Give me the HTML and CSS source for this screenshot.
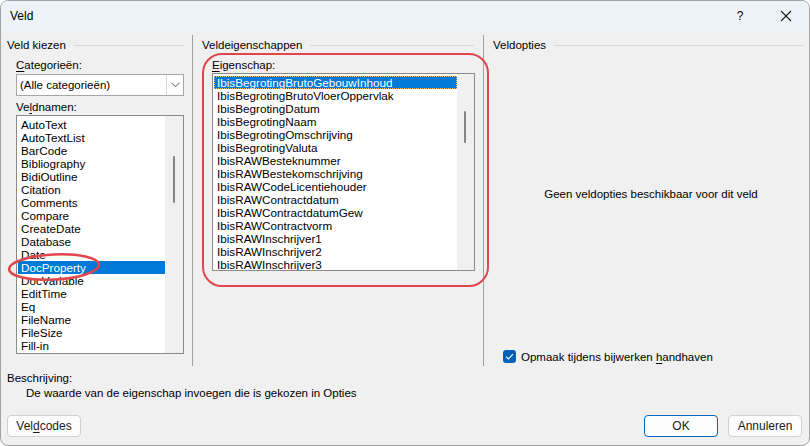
FILE: index.html
```html
<!DOCTYPE html>
<html lang="nl">
<head>
<meta charset="utf-8">
<title>Veld</title>
<link rel="stylesheet" href="styles.css">
</head>
<body>
<div class="window">
  <div class="titlebar">
    <span class="title">Veld</span>
    <span class="tb-help">?</span>
    <span class="tb-close">
      <svg width="12" height="12" viewBox="0 0 12 12"><path d="M1 1L11 11M11 1L1 11" stroke="#1a1a1a" stroke-width="1.1" fill="none"/></svg>
    </span>
  </div>

  <div class="columns">
    <div class="col col-left">
      <div class="group-head"><span>Veld kiezen</span></div>
      <div class="label"><u>C</u>ategorieën:</div>
      <div class="combo">
        <span class="combo-text">(Alle categorieën)</span>
        <span class="combo-btn">
          <svg width="9" height="6" viewBox="0 0 9 6"><path d="M0.5 0.8L4.5 4.8L8.5 0.8" stroke="#555" stroke-width="1" fill="none"/></svg>
        </span>
      </div>
      <div class="label">Ve<u>l</u>dnamen:</div>
      <div class="listbox listbox-left">
        <div class="items">
          <div class="item">AutoText</div>
          <div class="item">AutoTextList</div>
          <div class="item">BarCode</div>
          <div class="item">Bibliography</div>
          <div class="item">BidiOutline</div>
          <div class="item">Citation</div>
          <div class="item">Comments</div>
          <div class="item">Compare</div>
          <div class="item">CreateDate</div>
          <div class="item">Database</div>
          <div class="item">Date</div>
          <div class="item selected">DocProperty</div>
          <div class="item">DocVariable</div>
          <div class="item">EditTime</div>
          <div class="item">Eq</div>
          <div class="item">FileName</div>
          <div class="item">FileSize</div>
          <div class="item">Fill-in</div>
        </div>
        <div class="scrollbar"><div class="thumb thumb-left"></div></div>
      </div>
    </div>

    <div class="col col-mid">
      <div class="group-head"><span>Veldeigenschappen</span></div>
      <div class="label label-mid"><u>E</u>igenschap:</div>
      <div class="listbox listbox-mid">
        <div class="items">
          <div class="item selected focused">IbisBegrotingBrutoGebouwInhoud</div>
          <div class="item">IbisBegrotingBrutoVloerOppervlak</div>
          <div class="item">IbisBegrotingDatum</div>
          <div class="item">IbisBegrotingNaam</div>
          <div class="item">IbisBegrotingOmschrijving</div>
          <div class="item">IbisBegrotingValuta</div>
          <div class="item">IbisRAWBesteknummer</div>
          <div class="item">IbisRAWBestekomschrijving</div>
          <div class="item">IbisRAWCodeLicentiehouder</div>
          <div class="item">IbisRAWContractdatum</div>
          <div class="item">IbisRAWContractdatumGew</div>
          <div class="item">IbisRAWContractvorm</div>
          <div class="item">IbisRAWInschrijver1</div>
          <div class="item">IbisRAWInschrijver2</div>
          <div class="item">IbisRAWInschrijver3</div>
        </div>
        <div class="scrollbar"><div class="thumb thumb-mid"></div></div>
      </div>
    </div>

    <div class="col col-right">
      <div class="group-head"><span>Veldopties</span></div>
      <div class="no-options">Geen veldopties beschikbaar voor dit veld</div>
      <label class="check">
        <span class="checkbox">
          <svg width="9" height="7" viewBox="0 0 9 7"><path d="M1 3.6L3.4 6L8 1.2" stroke="#fff" stroke-width="1.1" fill="none"/></svg>
        </span>
        <span>Opmaak tijdens bijwerken <u>h</u>andhaven</span>
      </label>
    </div>
  </div>

  <div class="description">
    <div class="desc-label">Beschrijving:</div>
    <div class="desc-text">De waarde van de eigenschap invoegen die is gekozen in Opties</div>
  </div>

  <div class="footer">
    <button class="btn">Vel<u>d</u>codes</button>
    <span class="spacer"></span>
    <button class="btn btn-default">OK</button>
    <button class="btn">Annuleren</button>
  </div>

  <div class="mark-rect"></div>
  <svg class="mark-ellipse" width="110" height="40" viewBox="0 0 110 40">
    <ellipse cx="53" cy="20" rx="45" ry="12.5" transform="rotate(-3 53 20)" stroke="#e0474c" stroke-width="2.6" fill="none"/>
  </svg>
</div>
</body>
</html>
```

FILE: styles.css
```css
* { box-sizing: border-box; }
html, body { margin: 0; padding: 0; background: #ffffff; }
body {
  font-family: "Liberation Sans", Arial, sans-serif;
  font-size: 11.5px;
  color: #000;
}
u { text-decoration: underline; text-underline-offset: 2px; }

.window {
  position: relative;
  width: 810px;
  height: 446px;
  background: #f0f0f0;
  border: 1px solid #a3a3a3;
  border-radius: 8px;
  overflow: hidden;
}

.titlebar {
  height: 30px;
  background: #eef3f8;
  display: flex;
  align-items: center;
  padding-left: 9px;
}
.title { flex: 1; font-size: 12px; }
.tb-help { width: 46px; text-align: center; font-size: 12px; }
.tb-close { width: 46px; display: flex; justify-content: center; align-items: center; }

.columns {
  display: flex;
  margin-top: 4px;
  height: 331px;
}
.col { display: flex; flex-direction: column; }
.col-left { width: 192px; border-right: 1px solid #a0a0a0; padding: 0 8px 0 6px; }
.col-mid { width: 291px; border-right: 1px solid #a0a0a0; padding: 0 9px 0 9px; }
.col-right { flex: 1; padding: 0 5px 0 9px; }

.group-head {
  display: flex;
  align-items: center;
  height: 20px;
  line-height: 20px;
}
.group-head::after {
  content: "";
  flex: 1;
  height: 1px;
  background: #d7d7d7;
  margin-left: 8px;
}

.label {
  margin: 2px 0 0 9px;
  line-height: 16px;
  height: 16px;
}

.combo {
  margin: 1px 0 1px 9px;
  height: 22px;
  background: #fff;
  border: 1px solid #a6a6a6;
  display: flex;
  align-items: center;
}
.combo-text { flex: 1; padding-left: 3px; }
.combo-btn {
  width: 17px;
  height: 20px;
  border-left: 1px solid #d6d6d6;
  display: flex;
  align-items: center;
  justify-content: center;
}

.listbox {
  background: #fff;
  border: 1px solid #8a8a8a;
  display: flex;
  margin-left: 9px;
}
.listbox-left { height: 239px; }
.listbox-mid { height: 198px; margin-left: 10px; margin-right: -1px; }
.label-mid { margin-left: 10px; }

.items {
  flex: 1;
  padding: 2px 0 0 1px;
  overflow: hidden;
  font-family: "Liberation Sans", Arial, sans-serif;
  font-size: 11.7px;
}
.item {
  height: 13px;
  line-height: 13px;
  padding-left: 3px;
  white-space: nowrap;
}
.item.selected { background: #0078d7; color: #fff; }
.item.focused { outline: 1px dotted #e8c27a; outline-offset: -1px; }

.scrollbar {
  width: 17px;
  background: #f0f0f0;
  position: relative;
}
.listbox-left .scrollbar { width: 18px; }
.thumb {
  position: absolute;
  left: 7px;
  width: 2px;
  background: #858585;
  border-radius: 1px;
}
.thumb-left { top: 40px; height: 47px; left: 8px; }
.thumb-mid { top: 37px; height: 32px; }

.no-options {
  text-align: center;
  margin-top: 133px;
  margin-right: -5px;
}
.check {
  display: flex;
  align-items: center;
  margin-top: 150px;
  margin-left: 10px;
}
.checkbox {
  width: 13px;
  height: 13px;
  background: #005fb8;
  border-radius: 3px;
  display: flex;
  align-items: center;
  justify-content: center;
  margin-right: 5px;
}

.description { padding-left: 6px; margin-top: 4px; }
.desc-label { line-height: 16px; }
.desc-text { line-height: 16px; padding-left: 19px; margin-top: -1px; }

.footer {
  display: flex;
  padding: 0 7px 0 6px;
  margin-top: 14px;
  gap: 10px;
}
.spacer { flex: 1; }
.btn {
  width: 74px;
  height: 22px;
  background: #fdfdfd;
  border: 1px solid #d0d0d0;
  border-radius: 4px;
  font-family: "Liberation Sans", Arial, sans-serif;
  font-size: 12px;
  color: #1a1a1a;
  padding: 0;
}
.btn-default { border: 1px solid #0067c0; }

.mark-rect {
  position: absolute;
  left: 201px;
  top: 52px;
  width: 287px;
  height: 234px;
  border: 2.6px solid #e0474c;
  border-radius: 20px;
}
.mark-ellipse {
  position: absolute;
  left: 0px;
  top: 246px;
}
```
